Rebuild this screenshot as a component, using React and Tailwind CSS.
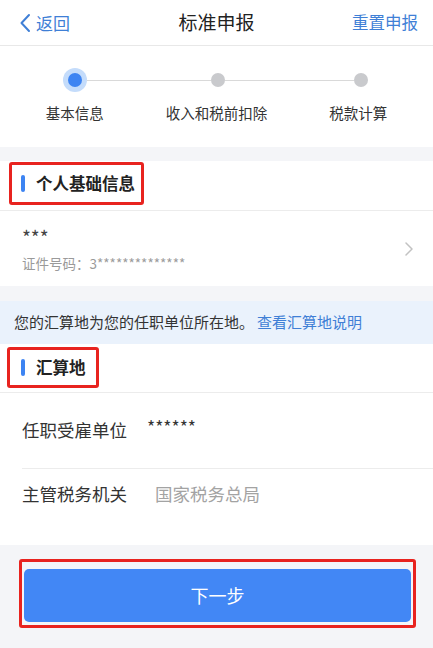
import React from 'react';

const font = { fontFamily: '"Noto Sans CJK SC", "Noto Sans", sans-serif' };

// Header bar with back / title / reset
const Header = () => (
  <div className="h-[46px] bg-white border-b border-[#e8e8e8] flex items-center justify-between pl-[19px] pr-[15px] relative">
    <div className="flex items-center text-[17px] text-[#3f7fd6] leading-none">
      <svg width="12" height="20" viewBox="0 0 12 20" className="mr-[5px]">
        <path d="M10 2 L2.5 10 L10 18" fill="none" stroke="#3f7fd6" strokeWidth="2" strokeLinecap="round" strokeLinejoin="round" />
      </svg>
      返回
    </div>
    <div className="absolute left-0 right-0 text-center text-[19px] text-[#222] pointer-events-none">标准申报</div>
    <div className="text-[16.5px] text-[#3f7fd6]">重置申报</div>
  </div>
);

// Progress steps
const Steps = () => (
  <div className="bg-white pt-[22px] pb-[24px]">
    <div className="flex items-center h-[24px] pl-[63px]">
      <div className="w-[24px] h-[24px] rounded-full bg-[#c4dcfb] flex items-center justify-center">
        <div className="w-[14px] h-[14px] rounded-full bg-[#3d84f2]" />
      </div>
      <div className="w-[124px] h-[1px] bg-[#d9d9d9]" />
      <div className="w-[14px] h-[14px] rounded-full bg-[#c9cacd]" />
      <div className="w-[129px] h-[1px] bg-[#d9d9d9]" />
      <div className="w-[14px] h-[14px] rounded-full bg-[#c9cacd]" />
    </div>
    <div className="grid grid-cols-3 px-[4px] mt-[11px] text-[14.5px] leading-[20px] text-[#333] text-center">
      <div>基本信息</div>
      <div>收入和税前扣除</div>
      <div>税款计算</div>
    </div>
  </div>
);

const SectionTitle = ({ children, boxClass }) => (
  <div className={`inline-flex items-center border-[3px] border-[#e8231f] rounded-[3px] ${boxClass}`}>
    <div className="w-[4px] h-[17px] rounded-full bg-[#3d84f2]" />
    <div className="ml-[11px] text-[16.5px] font-bold text-[#222]">{children}</div>
  </div>
);

export default function App() {
  return (
    <div className="w-[433px] h-[648px] bg-[#f4f5f8] overflow-hidden" style={font}>
      <Header />
      <Steps />
      <div className="h-[14px]" />

      {/* 个人基础信息 */}
      <div className="bg-white">
        <div className="h-[50px] border-b border-[#ececec] pl-[9px] pt-[1px]">
          <SectionTitle boxClass="h-[43px] pl-[9px] pr-[6px]">个人基础信息</SectionTitle>
        </div>
        <div className="h-[75px] flex items-center justify-between pl-[22px] pr-[19px]">
          <div className="flex flex-col">
            <div className="text-[19px] leading-[22px] text-[#444]">***</div>
            <div className="text-[13.5px] leading-[18px] text-[#9a9a9a] mt-[6px]">证件号码：3**************</div>
          </div>
          <svg width="10" height="16" viewBox="0 0 10 16">
            <path d="M2 2 L8 8 L2 14" fill="none" stroke="#c2c2c2" strokeWidth="1.5" strokeLinecap="round" strokeLinejoin="round" />
          </svg>
        </div>
      </div>

      <div className="h-[15px]" />

      {/* notice */}
      <div className="h-[43px] bg-[#eaf2fc] flex items-center pl-[14px] text-[15px] text-[#333]">
        <span>您的汇算地为您的任职单位所在地。</span>
        <span className="text-[#3f7fd6] ml-[3px]">查看汇算地说明</span>
      </div>

      {/* 汇算地 */}
      <div className="bg-white pb-[25px]">
        <div className="h-[49px] border-b border-[#ececec] pl-[7px] pt-[3px]">
          <SectionTitle boxClass="h-[41px] pl-[11px] pr-[10px]">汇算地</SectionTitle>
        </div>
        <div className="ml-[22px] h-[76px] border-b border-[#ececec] flex items-center text-[17.5px]">
          <span className="text-[#333]">任职受雇单位</span>
          <span className="ml-[20px] text-[#333] -mt-[6px]">******</span>
        </div>
        <div className="ml-[22px] h-[51px] flex items-center text-[17.5px]">
          <span className="text-[#333]">主管税务机关</span>
          <span className="ml-[28px] text-[#a3a3a3]">国家税务总局</span>
        </div>
      </div>

      {/* next button */}
      <div className="pt-[14px] pl-[19px] pr-[17px]">
        <div className="border-[3px] border-[#e8231f] rounded-[3px] pt-[7px] pb-[3px] px-[2px]">
          <div className="h-[53px] rounded-[5px] bg-[#4287f5] flex items-center justify-center text-white text-[18px]">
            下一步
          </div>
        </div>
      </div>
    </div>
  );
}
